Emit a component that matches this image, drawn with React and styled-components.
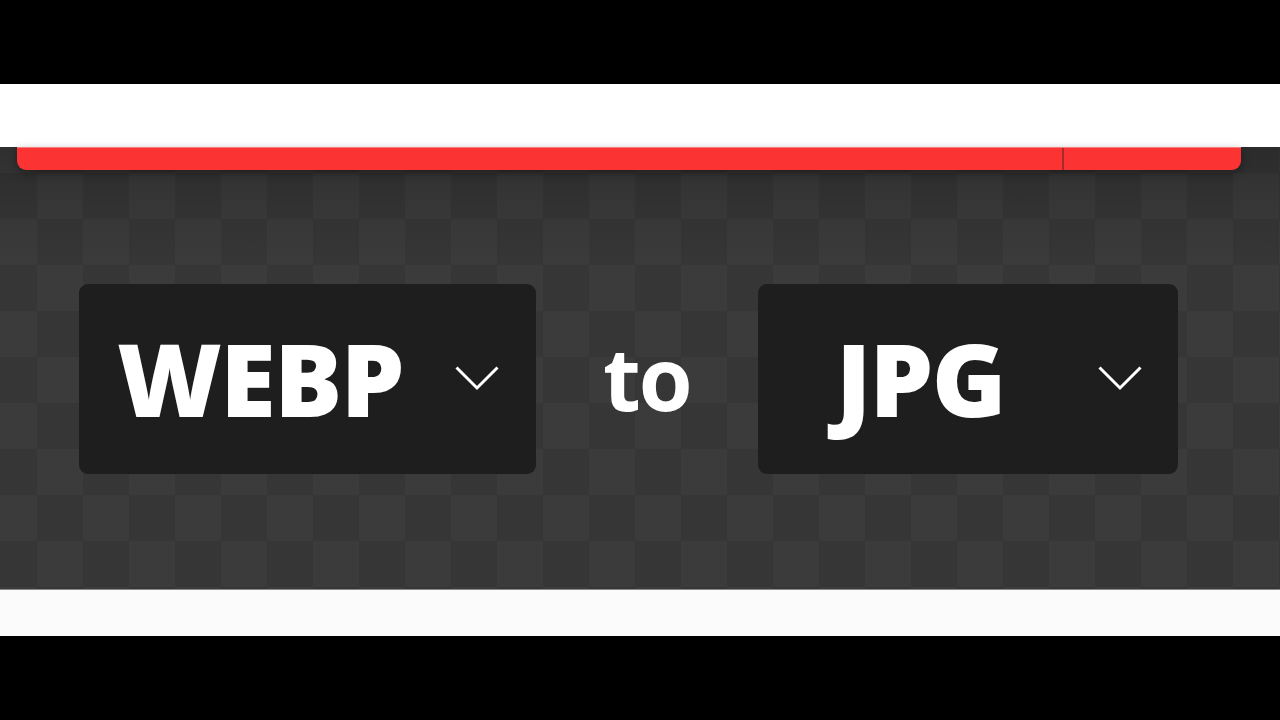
import React from "react";
import styled, { createGlobalStyle } from "styled-components";

const Global = createGlobalStyle`
  html, body { margin: 0; padding: 0; background: #000; }
  body { font-family: "Open Sans", "Liberation Sans", sans-serif; }
`;

const Page = styled.div`
  width: 1280px;
  height: 720px;
  display: flex;
  flex-direction: column;
  background: #000;
  overflow: hidden;
`;

const Letterbox = styled.div`
  height: 84px;
  flex: none;
  background: #000;
`;

const TopBand = styled.div`
  height: 63px;
  flex: none;
  background: #ffffff;
`;

const Stage = styled.div`
  height: 442px;
  flex: none;
  display: flex;
  flex-direction: column;
  background-color: #383838;
  background-image:
    linear-gradient(to bottom, rgba(0,0,0,0.2), rgba(0,0,0,0.08) 60px, rgba(0,0,0,0) 120px),
    conic-gradient(#3b3b3b 25%, #363636 0 50%, #3b3b3b 0 75%, #363636 0);
  background-size: 100% 100%, 92px 92px;
  background-position: 0 0, -9px 26px;
`;

const RedBar = styled.div`
  margin: 0 39px 0 17px;
  height: 23px;
  flex: none;
  display: flex;
  background: #fc3333;
  border-radius: 0 0 9px 9px;
  box-shadow: 0 3px 10px rgba(0, 0, 0, 0.35);
  border-top: 1px solid #f27b7b;
  box-sizing: border-box;
`;

const RedSegment = styled.div`
  flex: ${(p) => (p.$grow ? 1 : "none")};
  width: ${(p) => (p.$grow ? "auto" : "177px")};
  border-left: ${(p) => (p.$divider ? "2px solid #a52a2a" : "none")};
`;

const Row = styled.div`
  flex: 1;
  display: flex;
  align-items: center;
  padding-left: 79px;
  padding-bottom: 1px;
`;

const Select = styled.div`
  width: ${(p) => p.$w}px;
  height: 190px;
  box-sizing: border-box;
  padding: 0 ${(p) => p.$pr}px 0 ${(p) => p.$pl}px;
  display: flex;
  align-items: center;
  justify-content: space-between;
  background: #1e1e1e;
  border-radius: 9px;
  flex: none;
`;

const Format = styled.span`
  color: #fff;
  font-family: "Open Sans", sans-serif;
  font-weight: 800;
  font-size: 101px;
  line-height: 1;
  letter-spacing: -1.6px;
  margin-top: -2px;
`;

const To = styled.span`
  color: #fff;
  font-family: "Open Sans", sans-serif;
  font-weight: 700;
  font-size: 87px;
  line-height: 1;
  letter-spacing: -2px;
  margin: -4px 67px 0 67px;
`;

const Chevron = () => (
  <svg width="44" height="26" viewBox="0 0 44 26" fill="none">
    <polyline points="1.5,1.5 22,22 42.5,1.5" stroke="#fff" strokeWidth="3" />
  </svg>
);

const BottomBand = styled.div`
  height: 47px;
  flex: none;
  background: #fbfbfb;
  border-top: 1px solid #8a8a8a;
  box-sizing: border-box;
`;

export default function App() {
  return (
    <>
      <Global />
      <Page>
        <Letterbox />
        <TopBand />
        <Stage>
          <RedBar>
            <RedSegment $grow />
            <RedSegment $divider />
          </RedBar>
          <Row>
            <Select $w={457} $pl={38} $pr={37}>
              <Format>WEBP</Format>
              <Chevron />
            </Select>
            <To>to</To>
            <Select $w={420} $pl={78} $pr={36}>
              <Format>JPG</Format>
              <Chevron />
            </Select>
          </Row>
        </Stage>
        <BottomBand />
        <Letterbox />
      </Page>
    </>
  );
}
